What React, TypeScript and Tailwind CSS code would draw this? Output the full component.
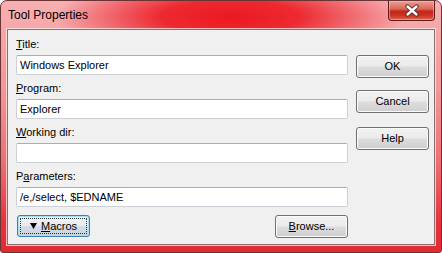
import React from 'react';

const Label = ({ text, u }: { text: string; u: number }) => (
  <div className="h-[13px] leading-[13px] mb-[4px] text-black">
    {text.slice(0, u)}
    <span className="underline underline-offset-[1px]">{text[u]}</span>
    {text.slice(u + 1)}
  </div>
);

const Field = ({ value }: { value: string }) => (
  <div className="h-[20px] w-[332px] bg-white border border-[#cdd0d6] border-t-[#abadb3] rounded-[2px] pl-[3px] flex items-center leading-[13px] text-black">
    {value}
  </div>
);

const Button = ({ children, className = '' }: { children: React.ReactNode; className?: string }) => (
  <div
    className={`w-[73px] h-[23px] border border-[#707070] rounded-[3px] flex items-center justify-center text-black bg-[linear-gradient(180deg,#f2f2f2_0%,#ebebeb_48%,#dddddd_52%,#cfcfcf_100%)] shadow-[inset_0_0_0_1px_#fbfbfb] ${className}`}
  >
    {children}
  </div>
);

const App = () => {
  const fields = [
    { label: 'Title:', u: 0, value: 'Windows Explorer' },
    { label: 'Program:', u: 0, value: 'Explorer' },
    { label: 'Working dir:', u: 0, value: '' },
    { label: 'Parameters:', u: 1, value: '/e,/select, $EDNAME' },
  ];

  return (
    <div className="w-[442px] h-[253px] flex flex-col border border-[#6b3434] rounded-t-[7px] rounded-b-[3px] overflow-hidden font-['Liberation_Sans',Arial,sans-serif] text-[11px] bg-[radial-gradient(ellipse_175px_42px_at_52%_16px,#ec1820_0%,#ed2a31_40%,#f06a70_70%,rgba(245,160,162,0)_100%),linear-gradient(180deg,#f7b0b2_0%,#f39699_35%,#ee6d72_65%,#e5333b_88%,#e22a33_100%)]">
      {/* title bar */}
      <div className="h-[28px] flex items-start justify-between pl-[7px] pr-[6px]">
        <div className="mt-[7px] text-[12px] leading-[15px] text-black">Tool Properties</div>
        <div className="w-[47px] h-[20px] rounded-b-[4px] border border-t-0 border-[#5c1d1a] flex items-center justify-center bg-[linear-gradient(180deg,#eba096_0%,#dd6a5c_40%,#c4281a_55%,#c83220_75%,#e0644e_100%)] shadow-[inset_0_0_0_1px_rgba(255,200,190,0.5)]">
          <svg width="16" height="13" viewBox="0 0 16 13">
            <path d="M3.5 2.5 L12.5 10.5 M12.5 2.5 L3.5 10.5" stroke="#4a2a2a" strokeWidth="4.2" strokeLinecap="round" />
            <path d="M3.5 2.5 L12.5 10.5 M12.5 2.5 L3.5 10.5" stroke="#ffffff" strokeWidth="2.4" strokeLinecap="round" />
          </svg>
        </div>
      </div>

      {/* client area */}
      <div className="mx-[6px] mb-[7px] flex-1 bg-[#f0f0f0] border border-[#8a6f70] shadow-[0_0_0_1px_rgba(255,235,235,0.75)] flex pl-[8px] pr-[5px]">
        <div className="w-[332px] pt-[8px] flex flex-col">
          {fields.map((f) => (
            <div key={f.label} className="mb-[7px]">
              <Label text={f.label} u={f.u} />
              <Field value={f.value} />
            </div>
          ))}
          <div className="flex justify-between mt-[1px]">
            <div className="w-[73px] h-[22px] border border-[#3c7fb1] rounded-[3px] flex items-center justify-center ml-[1px] bg-[linear-gradient(180deg,#f0f4f7_0%,#e6ecf0_48%,#d5dde3_52%,#c8d2da_100%)] shadow-[inset_0_0_0_1px_#a8def5]">
              <div className="w-[67px] h-[16px] border border-dotted border-[#333] flex items-center justify-center gap-[4px] text-black">
                <svg width="7" height="6" viewBox="0 0 7 6">
                  <path d="M0 0 L7 0 L3.5 6 Z" fill="#000" />
                </svg>
                <span>
                  <span className="underline underline-offset-[1px]">M</span>acros
                </span>
              </div>
            </div>
            <Button>
              <span>
                <span className="underline underline-offset-[1px]">B</span>rowse...
              </span>
            </Button>
          </div>
        </div>
        <div className="ml-[8px] pt-[25px] flex flex-col">
          <Button>OK</Button>
          <Button className="mt-[12px]">Cancel</Button>
          <Button className="mt-[14px]">Help</Button>
        </div>
      </div>
    </div>
  );
};

export default App;
